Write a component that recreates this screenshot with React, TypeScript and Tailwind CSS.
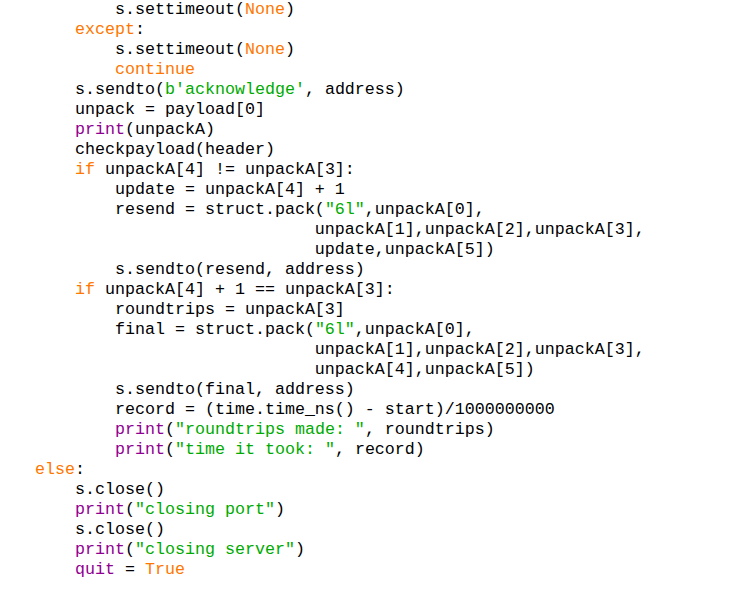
const K = "text-[#ff7700]";
const S = "text-[#00aa00]";
const B = "text-[#900090]";

type Seg = [string, string?];

const lines: Seg[][] = [
  [["        s.settimeout("], ["None", K], [")"]],
  [["    "], ["except", K], [":"]],
  [["        s.settimeout("], ["None", K], [")"]],
  [["        "], ["continue", K]],
  [["    s.sendto("], ["b'acknowledge'", S], [", address)"]],
  [["    unpack = payload[0]"]],
  [["    "], ["print", B], ["(unpackA)"]],
  [["    checkpayload(header)"]],
  [["    "], ["if", K], [" unpackA[4] != unpackA[3]:"]],
  [["        update = unpackA[4] + 1"]],
  [["        resend = struct.pack("], ['"6l"', S], [",unpackA[0],"]],
  [["                            unpackA[1],unpackA[2],unpackA[3],"]],
  [["                            update,unpackA[5])"]],
  [["        s.sendto(resend, address)"]],
  [["    "], ["if", K], [" unpackA[4] + 1 == unpackA[3]:"]],
  [["        roundtrips = unpackA[3]"]],
  [["        final = struct.pack("], ['"6l"', S], [",unpackA[0],"]],
  [["                            unpackA[1],unpackA[2],unpackA[3],"]],
  [["                            unpackA[4],unpackA[5])"]],
  [["        s.sendto(final, address)"]],
  [["        record = (time.time_ns() - start)/1000000000"]],
  [["        "], ["print", B], ["("], ['"roundtrips made: "', S], [", roundtrips)"]],
  [["        "], ["print", B], ["("], ['"time it took: "', S], [", record)"]],
  [["else", K], [":"]],
  [["    s.close()"]],
  [["    "], ["print", B], ["("], ['"closing port"', S], [")"]],
  [["    s.close()"]],
  [["    "], ["print", B], ["("], ['"closing server"', S], [")"]],
  [["    "], ["quit", B], [" = "], ["True", K]],
];

export default function App() {
  return (
    <div className="w-[735px] h-[592px] bg-white overflow-hidden">
      <div className="pl-[35px] font-['Liberation_Mono','Courier_New',monospace] text-[16.67px] leading-[20px] text-black whitespace-pre">
        {lines.map((segs, i) => (
          <div key={i} className="h-[20px]">
            {segs.map(([t, c], j) => (
              <span key={j} className={c}>
                {t}
              </span>
            ))}
          </div>
        ))}
      </div>
    </div>
  );
}
